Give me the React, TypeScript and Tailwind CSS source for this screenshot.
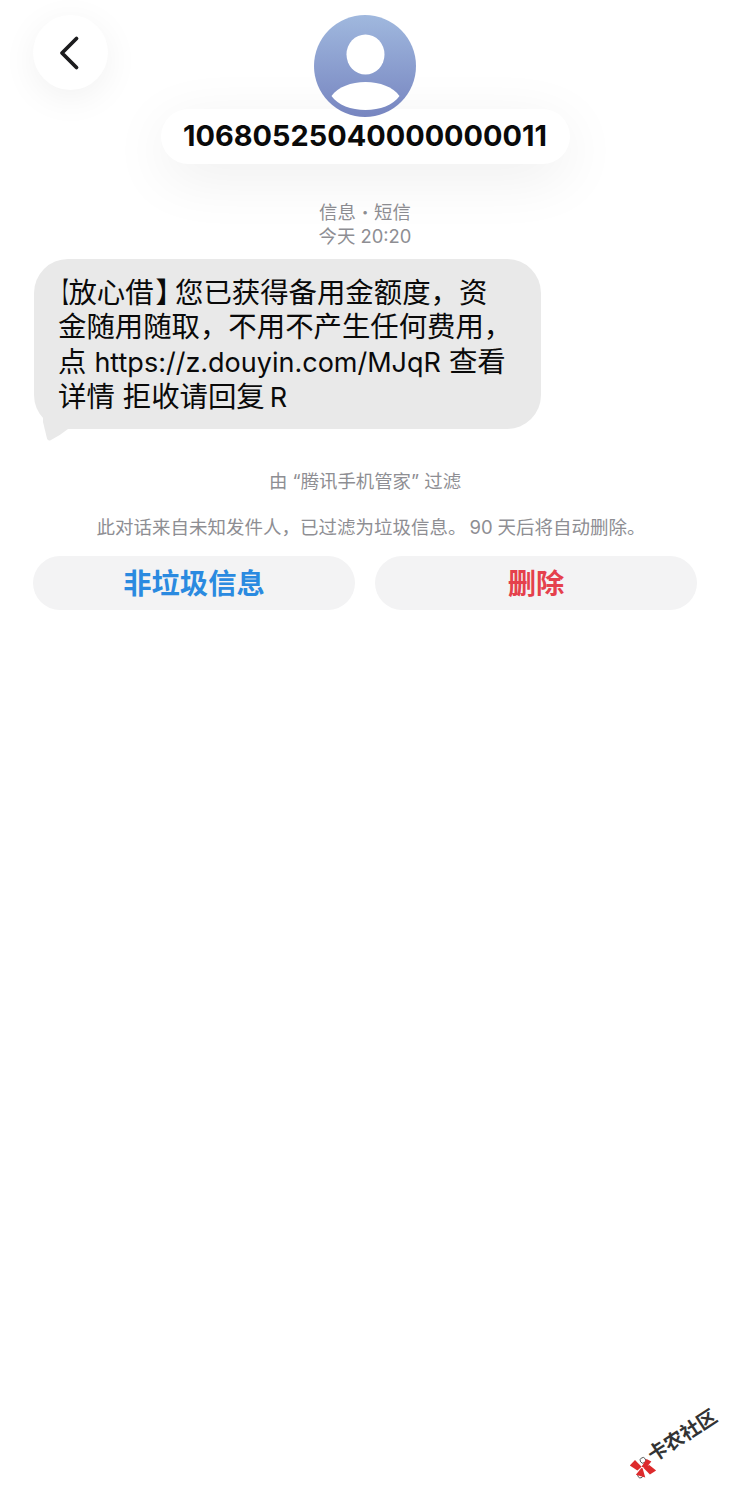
import React from "react";

export default function App() {
  return (
    <div className="relative w-[730px] h-[1500px] overflow-hidden bg-white font-['Inter','Noto_Sans_CJK_SC',sans-serif]">
      <header className="relative flex flex-col items-center pt-[15px]">
        <button className="absolute left-[33px] top-[15px] flex h-[75px] w-[75px] items-center justify-center rounded-full bg-white shadow-[0_8px_36px_rgba(0,0,0,0.06)]">
          <svg width="24" height="36" viewBox="0 0 24 36" fill="none" className="mr-[4px]">
            <path d="M19.500 3.500 L5 18 L19.500 32.500" stroke="#1c1c1e" strokeWidth="3.800" strokeLinecap="round" strokeLinejoin="round" />
          </svg>
        </button>
        <div className="relative z-10 h-[102px] w-[102px] overflow-hidden rounded-full bg-gradient-to-b from-[#a0b8de] to-[#7785c0]">
          <svg viewBox="0 0 102 102" className="h-full w-full">
            <ellipse cx="51.500" cy="39.500" rx="19" ry="20" fill="#fff" />
            <path d="M17.500 81 C24 72 37 67 51.500 67 C66 67 79 72 85.500 81 C79 90 66 95 51.500 95 C37 95 24 90 17.500 81 Z" fill="#fff" />
          </svg>
        </div>
        <div className="relative -mt-[8px] flex h-[55px] w-[409px] items-center justify-center rounded-full bg-white shadow-[0_14px_60px_rgba(0,0,0,0.07)]">
          <span className="text-[28.900px] font-bold leading-none text-[#0a0a0a]">10680525040000000011</span>
        </div>
      </header>

      <div className="mt-[36px] flex flex-col items-center text-[18.400px] leading-[24px] text-[#8e8e93]">
        <span className="flex items-center gap-[6px]">信息<span className="text-[11px]">•</span>短信</span>
        <span>今天 20:20</span>
      </div>

      <div className="relative ml-[34px] mt-[11px] h-[170px] w-[507px] rounded-[34px] bg-[#e9e9e9] pl-[24px] pt-[17px] text-[28.400px] leading-[34.300px] text-[#0a0a0a]">
        <p className="-ml-[18px] whitespace-nowrap"><span className="inline-block origin-right scale-x-50">【</span>放心借<span className="ml-[2px] tracking-[-9px]">】</span>您已获得备用金额度，资</p>
        <p className="whitespace-nowrap">金随用随取，不用不产生任何费用，</p>
        <p className="whitespace-nowrap">点 <span className="text-[27px]">https://z.douyin.com/MJqR</span> 查看</p>
        <p className="whitespace-nowrap">详情 拒收请回复<span className="ml-[5px] text-[27px]">R</span></p>
        <svg width="28" height="28" viewBox="0 0 28 28" className="absolute left-[8px] top-[156px]">
          <path d="M1 7 L5 23.500 Q6 26.500 9 25 Q18 20.500 26 14 L26 0 L1 0 Z" fill="#e9e9e9" />
        </svg>
      </div>

      <p className="mt-[40px] text-center text-[18.400px] leading-[24px] text-[#8e8e93]">由 “腾讯手机管家” 过滤</p>
      <p className="mt-[22px] pl-[12px] text-center text-[18.500px] leading-[24px] text-[#8e8e93]">此对话来自未知发件人，已过滤为垃圾信息。<span className="ml-[3px] mr-[5px]">90</span>天后将自动删除。</p>

      <div className="mx-[33px] mt-[17px] grid grid-cols-2 gap-[20px]">
        <button className="h-[54px] rounded-full bg-[#f3f3f4] pt-[2px] text-[28.300px] font-semibold text-[#2a8ae0]">非垃圾信息</button>
        <button className="h-[54px] rounded-full bg-[#f3f3f4] pt-[2px] text-[28.300px] font-semibold text-[#e5404c]">删除</button>
      </div>

      <div className="absolute left-[632px] top-[1462px] flex h-[24px] w-[100px] origin-left -rotate-[33deg] items-center">
        <svg width="24" height="24" viewBox="0 0 26 26" className="shrink-0">
          <circle cx="18" cy="7" r="3" fill="#fff" stroke="#333" strokeWidth="0.800" />
          <circle cx="7" cy="19" r="3" fill="#fff" stroke="#333" strokeWidth="0.800" />
          <path d="M3 4 L11 2 L13 12 L7 13 Z" fill="#dd2a2c" />
          <path d="M13 12 L22 8 L25 13 L16 16 Z" fill="#dd2a2c" />
          <path d="M3 16 L12 13 L13 14 L10 24 Z" fill="#dd2a2c" />
          <path d="M14 14 L21 15 L24 24 L16 24 Z" fill="#dd2a2c" />
        </svg>
        <span className="-mt-[8px] whitespace-nowrap text-[19.500px] font-bold leading-none text-[#333]">卡农社区</span>
      </div>
    </div>
  );
}
